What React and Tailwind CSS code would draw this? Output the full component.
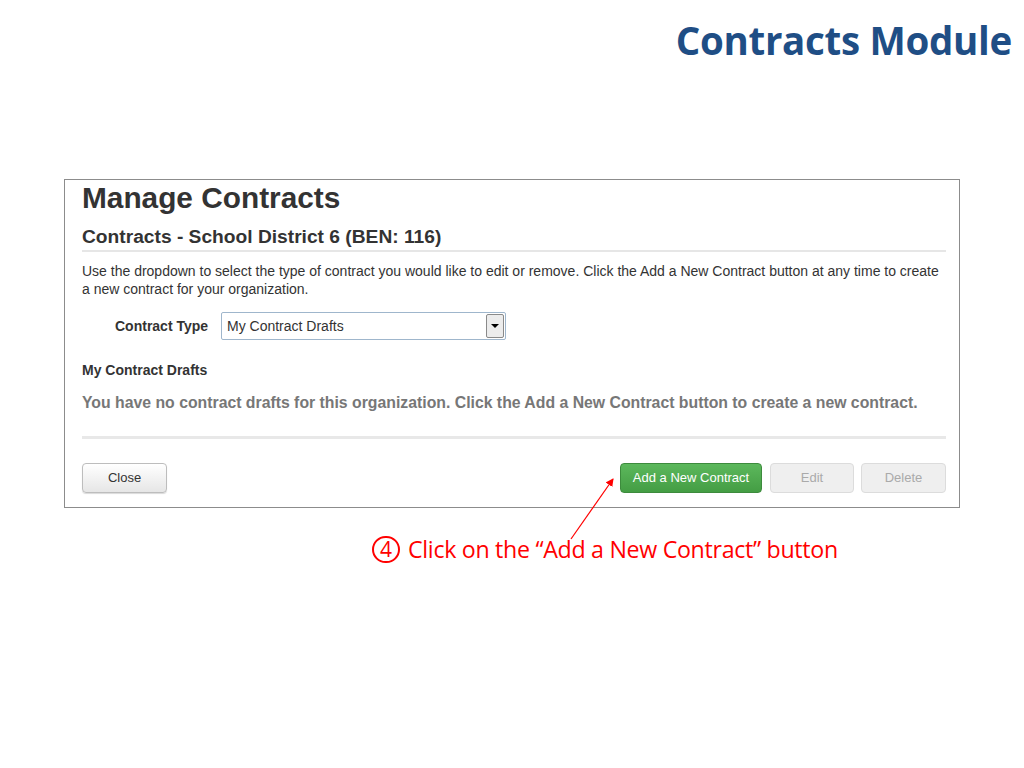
import React from 'react';

const btnBase = 'h-[30px] rounded-[4px] border text-[13px] flex items-center justify-center';

const App = () => {
  return (
    <div className="relative w-[1024px] h-[768px] bg-white overflow-hidden" style={{ fontFamily: '"Liberation Sans", Arial, sans-serif' }}>
      {/* slide title */}
      <div className="flex justify-end pr-[12px] pt-[14px] h-[179px]">
        <h1 className="text-[38.5px] leading-[52px] font-bold text-[#1f4e85]" style={{ fontFamily: '"Open Sans", sans-serif', letterSpacing: '-0.3px' }}>
          Contracts Module
        </h1>
      </div>

      {/* screenshot panel */}
      <div className="ml-[64px] w-[896px] h-[329px] border border-[#8c8c8c] pl-[17px] pr-[13px] text-[#333]">
        <h2 className="text-[29.8px] leading-[34px] font-bold mt-[1px]">Manage Contracts</h2>
        <h3 className="text-[19.2px] leading-[22px] font-bold mt-[11px]">Contracts - School District 6 (BEN: 116)</h3>
        <div className="h-[2px] bg-[#e6e6e6] mt-[2px]" />
        <p className="text-[14px] leading-[18px] mt-[10px]">
          Use the dropdown to select the type of contract you would like to edit or remove. Click the Add a New Contract button at any time to create a new contract for your organization.
        </p>
        <div className="flex items-center mt-[14px]">
          <span className="text-[14px] font-bold ml-[33px] w-[106px]">Contract Type</span>
          <div className="flex items-center w-[285px] h-[28px] border border-[#9fb6cc] rounded-[2px]">
            <span className="flex-1 text-[14px] pl-[5px]">My Contract Drafts</span>
            <div className="w-[18px] h-[24px] mr-[1px] border border-[#8a8a8a] rounded-[2px] bg-[#ececec] flex items-center justify-center">
              <div className="w-0 h-0 border-l-[4px] border-r-[4px] border-t-[4px] border-l-transparent border-r-transparent border-t-black" />
            </div>
          </div>
        </div>
        <div className="text-[14px] leading-[20px] font-bold mt-[20px]">My Contract Drafts</div>
        <p className="text-[15.8px] leading-[22px] font-bold text-[#777] mt-[12px]">
          You have no contract drafts for this organization. Click the Add a New Contract button to create a new contract.
        </p>
        <div className="h-[3px] bg-[#e8e8e8] mt-[22px]" />
        <div className="flex items-center mt-[24px]">
          <div className={`${btnBase} w-[85px] border-[#bdbdbd] bg-gradient-to-b from-white to-[#e6e6e6] text-[#333] shadow-[0_1px_1px_rgba(0,0,0,0.15)]`}>Close</div>
          <div className="flex-1" />
          <div className={`${btnBase} w-[142px] border-[#3d8b3d] bg-gradient-to-b from-[#5cb85c] to-[#449d44] text-white`}>Add a New Contract</div>
          <div className={`${btnBase} w-[84px] ml-[8px] border-[#dcdcdc] bg-[#efefef] text-[#aaa]`}>Edit</div>
          <div className={`${btnBase} w-[85px] ml-[7px] border-[#dcdcdc] bg-[#efefef] text-[#aaa]`}>Delete</div>
        </div>
      </div>

      {/* annotation */}
      <div className="flex items-center pl-[372px] mt-[26px] text-[#ff0000]" style={{ fontFamily: '"Open Sans", sans-serif' }}>
        <span className="inline-flex items-center justify-center w-[28px] h-[27px] rounded-full border-2 border-[#ff0000] text-[21px] leading-none">4</span>
        <span className="ml-[8px] text-[23.2px] leading-[30px]" style={{ letterSpacing: '-0.3px' }}>
          Click on the “Add a New Contract” button
        </span>
      </div>

      <svg className="absolute left-0 top-0 pointer-events-none" width="1024" height="768">
        <defs>
          <marker id="ah" markerWidth="8" markerHeight="8" refX="7" refY="4" orient="auto" markerUnits="userSpaceOnUse">
            <path d="M0,0 L8,4 L0,8 z" fill="#ff0000" />
          </marker>
        </defs>
        <line x1="571" y1="539" x2="613" y2="479" stroke="#ff0000" strokeWidth="1.2" markerEnd="url(#ah)" />
      </svg>
    </div>
  );
};

export default App;
